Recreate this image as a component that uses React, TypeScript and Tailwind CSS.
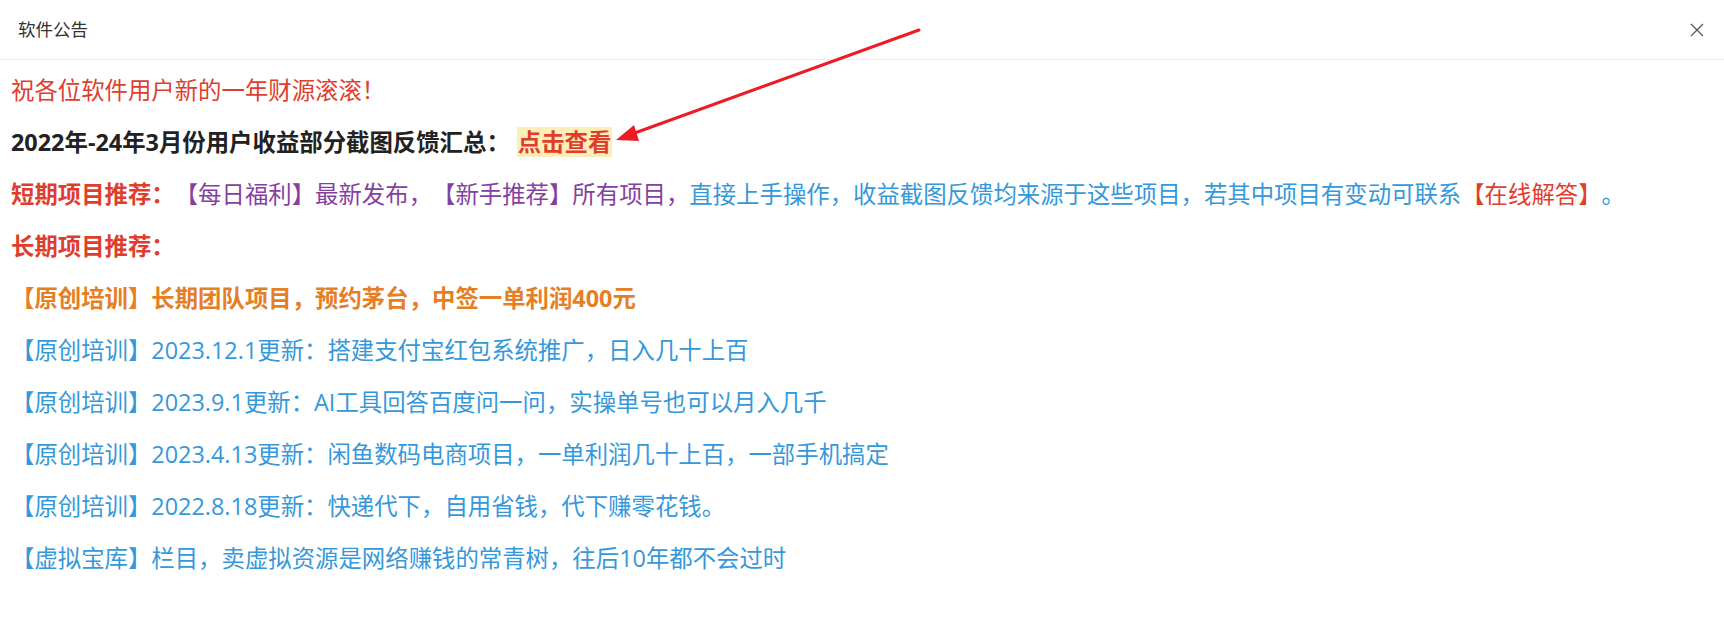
import React from 'react'

const font = { fontFamily: '"Open Sans", "Noto Sans CJK SC", sans-serif' }

function Line({ children, className = '' }: { children: React.ReactNode; className?: string }) {
  return <p className={`leading-[36px] mb-4 whitespace-nowrap ${className}`}>{children}</p>
}

function Pxpx({ date, text }: { date: string; text: string }) {
  return (
    <Line className="text-[#3598db]">
      【原创培训】{date}更新：{text}
    </Line>
  )
}

export default function App() {
  return (
    <div className="relative w-[1724px] h-[633px] bg-white overflow-hidden [text-spacing-trim:space-all]" style={font}>
      {/* header */}
      <div className="flex items-center justify-between h-[60px] border-b border-[#ececec] pl-[18px] pr-[20px]">
        <span className="text-[17.5px] text-[#333]">软件公告</span>
        <button className="w-[14px] h-[14px] text-[#555]">
          <svg viewBox="0 0 14 14" width="14" height="14" fill="none" stroke="currentColor" strokeWidth="1.2">
            <path d="M1 1L13 13M13 1L1 13" />
          </svg>
        </button>
      </div>

      {/* body */}
      <div className="px-[11px] pt-[12px] text-[23.4px]">
        <Line className="text-[#e03e2d]">祝各位软件用户新的一年财源滚滚！</Line>
        <Line className="font-bold text-[#222]">
          2022年-24年3月份用户收益部分截图反馈汇总：
          <span className="inline-block ml-[7px] leading-[30px] px-[1px] bg-[#fbeeb8] text-[#e03e2d]">点击查看</span>
        </Line>
        <Line>
          <span className="font-bold text-[#e03e2d]">短期项目推荐：</span>
          <span className="text-[#843fa1]">【每日福利】最新发布，【新手推荐】所有项目，</span>
          <span className="text-[#3598db]">直接上手操作，收益截图反馈均来源于这些项目，若其中项目有变动可联系</span>
          <span className="text-[#e03e2d]">【在线解答】</span>
          <span className="text-[#3598db]">。</span>
        </Line>
        <Line className="font-bold text-[#e03e2d]">长期项目推荐：</Line>
        <Line className="font-bold text-[#e67e23]">【原创培训】长期团队项目，预约茅台，中签一单利润400元</Line>
        <Pxpx date="2023.12.1" text="搭建支付宝红包系统推广，日入几十上百" />
        <Pxpx date="2023.9.1" text="AI工具回答百度问一问，实操单号也可以月入几千" />
        <Pxpx date="2023.4.13" text="闲鱼数码电商项目，一单利润几十上百，一部手机搞定" />
        <Pxpx date="2022.8.18" text="快递代下，自用省钱，代下赚零花钱。" />
        <Line className="text-[#3598db]">【虚拟宝库】栏目，卖虚拟资源是网络赚钱的常青树，往后10年都不会过时</Line>
      </div>

      {/* annotation arrow */}
      <svg className="absolute inset-0 pointer-events-none" width="1724" height="633">
        <line x1="919" y1="30" x2="632" y2="134" stroke="#ed1c24" strokeWidth="3" strokeLinecap="round" />
        <polygon points="616,140 634,125 639,141" fill="#ed1c24" />
      </svg>
    </div>
  )
}
